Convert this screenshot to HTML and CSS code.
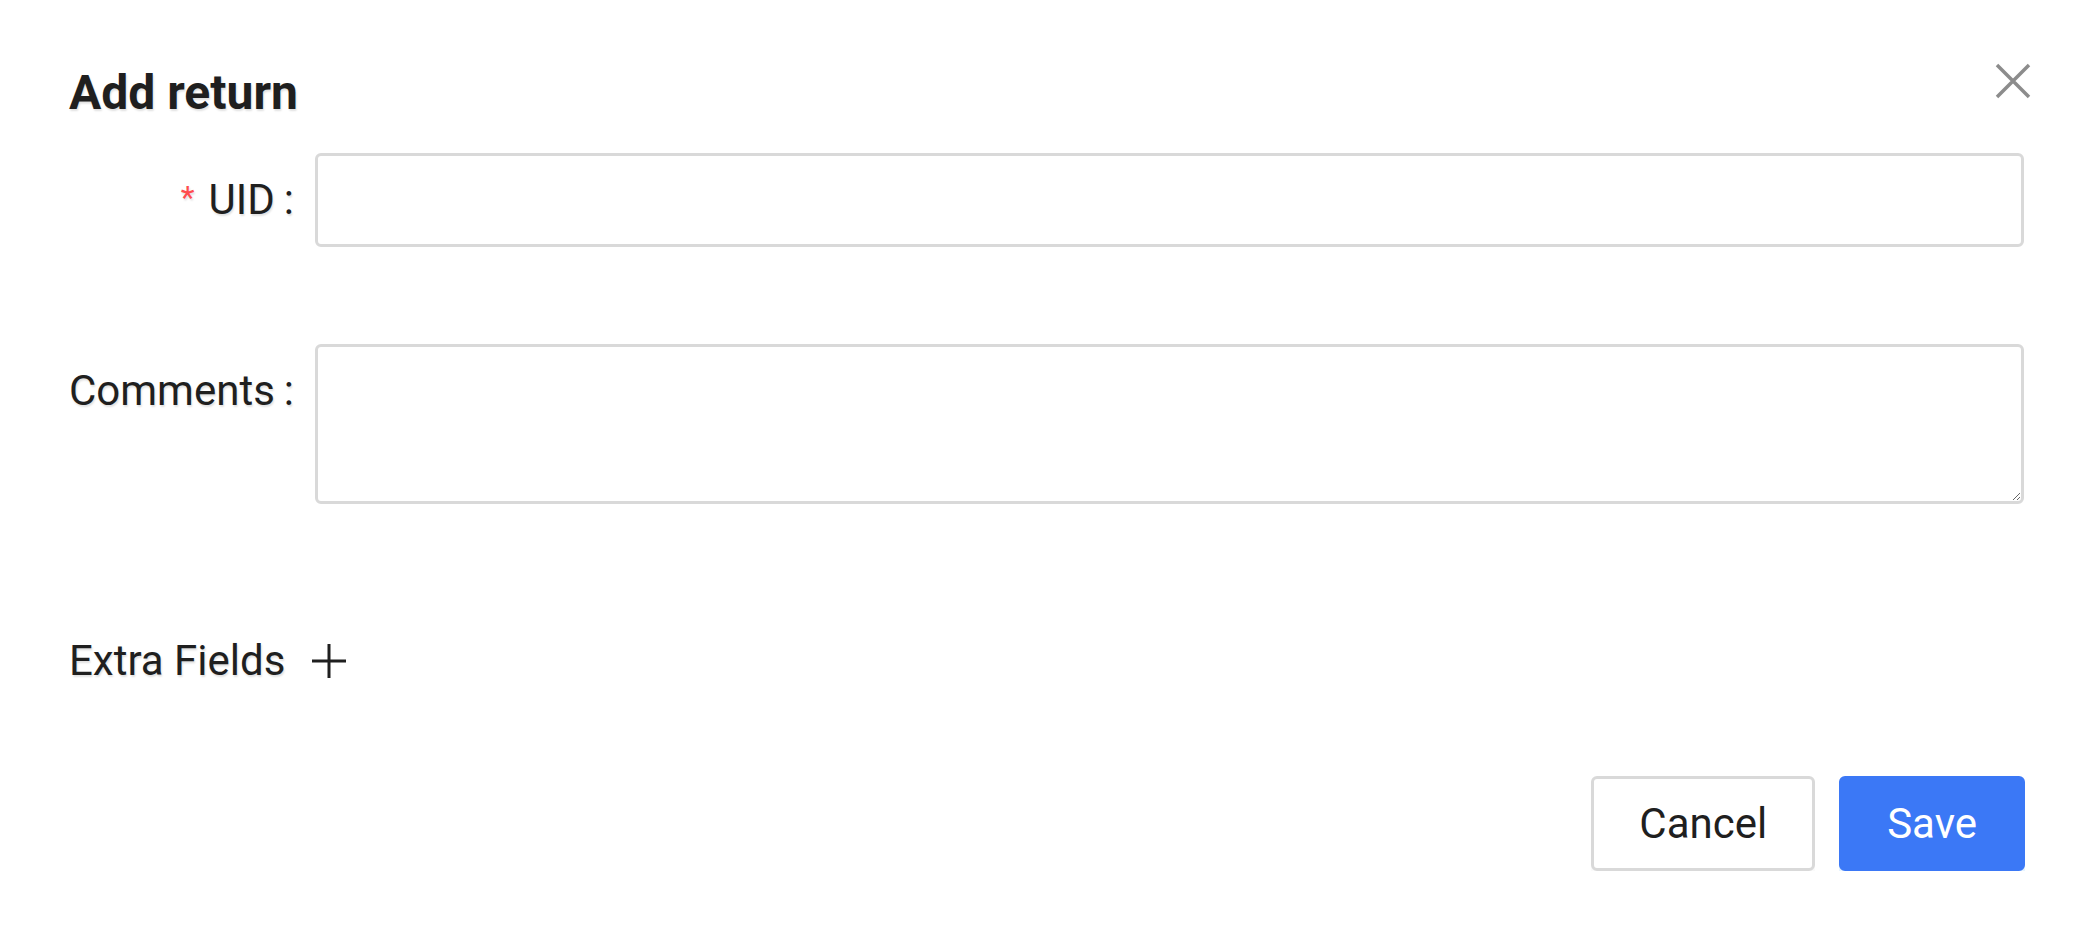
FILE: index.html
```html
<!DOCTYPE html>
<html lang="en">
<head>
    <meta charset="UTF-8">
    <meta name="viewport" content="width=device-width, initial-scale=1.0">
    <title>Add return</title>
    <link rel="stylesheet" href="styles.css">
</head>
<body>
    <div class="dialog">
        <div class="dialog-header">
            <h1 class="dialog-title">Add return</h1>
            <button class="close-btn" type="button" aria-label="Close">
                <svg width="36" height="36" viewBox="0 0 36 36">
                    <path d="M2 2 L34 34 M34 2 L2 34" stroke="#8c8c8c" stroke-width="3.5" fill="none"/>
                </svg>
            </button>
        </div>

        <form class="form">
            <div class="form-row">
                <label for="uid" class="form-label"><span class="required">*</span>UID<span class="colon">:</span></label>
                <input type="text" id="uid" class="form-input">
            </div>
            <div class="form-row form-row-area">
                <label for="comments" class="form-label">Comments<span class="colon">:</span></label>
                <textarea id="comments" class="form-textarea"></textarea>
            </div>

            <div class="extra-fields">
                <span>Extra Fields</span>
                <svg class="plus-icon" width="34" height="34" viewBox="0 0 34 34">
                    <path d="M17 0 V34 M0 17 H34" stroke="#1f1f1f" stroke-width="3" fill="none"/>
                </svg>
            </div>

            <div class="footer">
                <button type="button" class="btn btn-default">Cancel</button>
                <button type="button" class="btn btn-primary">Save</button>
            </div>
        </form>
    </div>
</body>
</html>
```

FILE: styles.css
```css
* {
    box-sizing: border-box;
}
body {
    margin: 0;
    background-color: #fff;
    font-family: Roboto, "Liberation Sans", Arial, sans-serif;
    color: #1f1f1f;
    text-shadow: 1px 2px 2px rgba(0, 0, 0, 0.12);
}
.dialog {
    padding: 57px 70px 0 69px;
}
.dialog-header {
    display: flex;
    justify-content: space-between;
    align-items: flex-start;
}
.dialog-title {
    margin: 0;
    font-size: 48px;
    font-weight: 700;
    line-height: 72px;
}
.close-btn {
    width: 36px;
    height: 36px;
    margin: 6px -7px 0 0;
    padding: 0;
    border: none;
    background: none;
    cursor: pointer;
}
.close-btn svg {
    display: block;
}
.form {
    margin-top: 24px;
}
.form-row {
    display: flex;
    align-items: flex-start;
    margin-bottom: 94px;
}
.form-row-area {
    margin-bottom: 125px;
}
.form-label {
    display: flex;
    justify-content: flex-end;
    align-items: baseline;
    flex-shrink: 0;
    width: 246px;
    padding-right: 21px;
    font-size: 42px;
    line-height: 94px;
    white-space: nowrap;
}
.required {
    color: #ff4d4f;
    font-size: 32px;
    margin-right: 14px;
    position: relative;
    top: -6px;
}
.colon {
    margin-left: 9px;
}
.form-input,
.form-textarea {
    flex: 1;
    display: block;
    margin: 0;
    border: 3px solid #d9d9d9;
    border-radius: 6px;
    background: #fff;
    font-family: inherit;
    font-size: 42px;
    outline: none;
}
.form-input {
    height: 94px;
    padding: 0 33px;
}
.form-textarea {
    height: 160px;
    padding: 12px 33px;
    resize: vertical;
}
.extra-fields {
    display: flex;
    align-items: center;
    gap: 27px;
    font-size: 42px;
    line-height: 63px;
}
.plus-icon {
    display: block;
}
.footer {
    display: flex;
    justify-content: flex-end;
    gap: 24px;
    margin-top: 84px;
    margin-right: -1px;
}
.btn {
    height: 95px;
    padding: 0 45px;
    border: 3px solid #d9d9d9;
    border-radius: 6px;
    font-family: inherit;
    font-size: 42px;
    cursor: pointer;
}
.btn-default {
    background-color: #fff;
    color: #1f1f1f;
    box-shadow: 0 6px 0 rgba(0, 0, 0, 0.02);
}
.btn-primary {
    background-color: #3b78f6;
    border-color: #3b78f6;
    color: #fff;
    box-shadow: 0 6px 0 rgba(5, 145, 255, 0.1);
}
```
